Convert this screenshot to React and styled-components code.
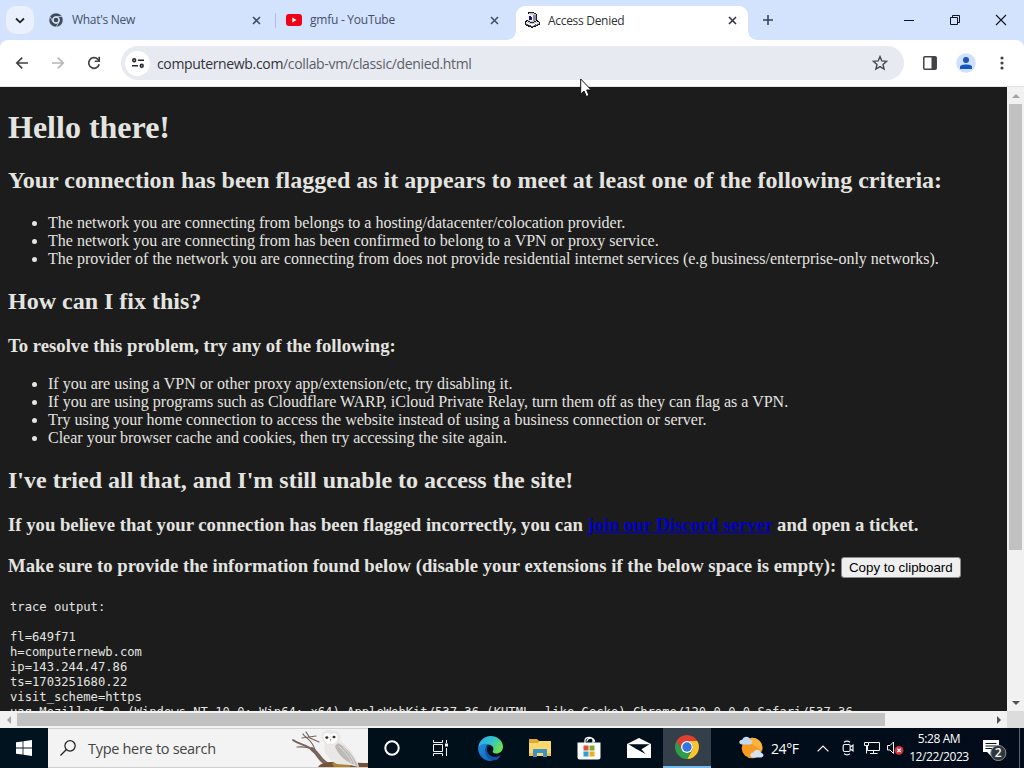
import React from "react";
import styled, { createGlobalStyle } from "styled-components";

const UI = `"Open Sans", "Noto Sans", sans-serif`;

const GlobalStyle = createGlobalStyle`
  * { box-sizing: border-box; }
  body { margin: 0; overflow: hidden; }
`;

const Desktop = styled.div`
  position: relative;
  width: 1024px;
  height: 768px;
  display: flex;
  flex-direction: column;
  overflow: hidden;
  font-family: ${UI};
`;

/* ---------- tab strip ---------- */
const TabStrip = styled.div`
  height: 40px;
  flex: none;
  display: flex;
  background: #d3e2fd;
`;
const TabSearch = styled.div`
  width: 28px;
  height: 28px;
  margin: 6px 6px 0;
  border-radius: 10px;
  background: #e9f1fe;
  display: flex;
  align-items: center;
  justify-content: center;
`;
const Tab = styled.div`
  width: 232px;
  height: ${(p) => (p.$active ? 34 : 28)}px;
  margin-top: 6px;
  padding: 0 8px;
  display: flex;
  align-items: ${(p) => (p.$active ? "flex-start" : "center")};
  position: relative;
  border-radius: 9px 9px 0 0;
  background: ${(p) => (p.$active ? "#fff" : "transparent")};
  & > * { ${(p) => (p.$active ? "height: 28px;" : "")} }
  &::before, &::after {
    content: "";
    display: ${(p) => (p.$active ? "block" : "none")};
    position: absolute;
    bottom: 0;
    width: 9px;
    height: 9px;
  }
  &::before { left: -9px; height: 9px; background: radial-gradient(circle at 0 0, transparent 8.5px, #fff 9px); }
  &::after { right: -9px; height: 9px; background: radial-gradient(circle at 100% 0, transparent 8.5px, #fff 9px); }
`;
const TabIcon = styled.span`
  width: 16px;
  display: flex;
  align-items: center;
  justify-content: center;
`;
const TabTitle = styled.span`
  flex: 1;
  margin-left: 8px;
  font-size: 12px;
  line-height: 30px;
  letter-spacing: ${(p) => p.$spacing || 0}px;
  white-space: nowrap;
  color: ${(p) => (p.$active ? "#303236" : "#44506a")};
`;
const TabClose = styled.span`
  width: 16px;
  display: flex;
  align-items: center;
  justify-content: center;
`;
const TabGap = styled.div`
  width: 6px;
  padding: 13px 0 0 3px;
  &::after {
    content: "";
    display: ${(p) => (p.$line ? "block" : "none")};
    width: 1px;
    height: 15px;
    background: #a9c0ea;
  }
`;
const NewTab = styled.div`
  width: 40px;
  display: flex;
  align-items: center;
  justify-content: center;
`;
const WindowButtons = styled.div`
  display: flex;
  margin-left: auto;
`;
const WindowButton = styled.div`
  width: 46px;
  height: 40px;
  display: flex;
  align-items: center;
  justify-content: center;
`;

/* ---------- toolbar ---------- */
const ToolbarBack = styled.div`
  flex: none;
  background: #d3e2fd;
`;
const Toolbar = styled.div`
  height: 47px;
  padding: 0 4px;
  display: flex;
  align-items: flex-start;
  background: #fff;
  border-radius: 8px 8px 0 0;
  border-bottom: 1px solid #e3e5e8;
`;
const ToolButton = styled.div`
  width: 36px;
  height: 46px;
  display: flex;
  align-items: center;
  justify-content: center;
`;
const Omnibox = styled.div`
  width: 783px;
  height: 34px;
  margin: 6px 8px 0 9px;
  padding: 0 6px 0 4px;
  display: flex;
  align-items: center;
  justify-content: space-between;
  border-radius: 17px;
  background: #e8eaf1;
`;
const SiteInfo = styled.div`
  width: 25px;
  height: 25px;
  border-radius: 50%;
  background: #fff;
  display: flex;
  align-items: center;
  justify-content: center;
`;
const Url = styled.div`
  flex: 1;
  margin-left: 7px;
  font-size: 14px;
  line-height: 35px;
  letter-spacing: ${(p) => p.$spacing || 0}px;
  color: #5b5f67;
  span { color: #303338; }
`;
const StarCell = styled.div`
  width: 36px;
  display: flex;
  justify-content: center;
`;

/* ---------- page ---------- */
const Viewport = styled.div`
  height: 624px;
  flex: none;
  display: flex;
`;
const Page = styled.main`
  width: 1007px;
  height: 624px;
  padding: 21.4px 8px 0;
  overflow: hidden;
  background: #1c1c1c;
  color: #e4e4e0;
  font-family: "Liberation Serif", "Times New Roman", serif;
  font-size: 16px;
  white-space: nowrap;
`;
const Title = styled.h1`
  margin: 0 0 19.4px;
  font-size: 32px;
  line-height: 39px;
`;
const Heading = styled.h2`
  margin: 0 0 19.9px;
  font-size: 24px;
  line-height: 27px;
`;
const SubHeading = styled.h3`
  margin: 0 0 16.7px;
  font-size: 18.72px;
  line-height: ${(p) => p.$height || 23.5}px;
`;
const Link = styled.a`
  color: #0000c8;
  text-decoration: underline;
`;
const List = styled.ul`
  margin: 0 0 19.9px;
  padding-left: 40px;
  line-height: 18px;
`;
const CopyButton = styled.button`
  width: 120px;
  height: 21px;
  padding: 0;
  border: 1px solid #8a8a8a;
  border-radius: 3px;
  background: #efefef;
  color: #000;
  font: 13.33px/17px "Liberation Sans", Arial, sans-serif;
  vertical-align: 0;
`;
const Trace = styled.pre`
  margin: 0;
  padding: 6px 0 0 2px;
  font: 12.18px/15px "DejaVu Sans Mono", monospace;
`;

/* ---------- scroll bars ---------- */
const VScroll = styled.div`
  width: 17px;
  height: 624px;
  padding: 0 2px;
  display: flex;
  flex-direction: column;
  background: #f1f1f1;
`;
const HScroll = styled.div`
  height: 17px;
  flex: none;
  padding: 2px 0;
  display: flex;
  background: #f1f1f1;
`;
const Arrow = styled.div`
  width: ${(p) => (p.$h ? 17 : 13)}px;
  height: ${(p) => (p.$h ? 13 : 17)}px;
  display: flex;
  align-items: center;
  justify-content: center;
`;
const Thumb = styled.div`
  width: ${(p) => p.$w}px;
  height: ${(p) => p.$h}px;
  background: #c1c1c1;
`;
const Spring = styled.div`
  flex: 1;
`;
const Corner = styled.div`
  width: 17px;
  height: 17px;
  margin-top: -2px;
  background: #dcdcdc;
`;

/* ---------- taskbar ---------- */
const Taskbar = styled.div`
  height: 40px;
  flex: none;
  display: flex;
  background: linear-gradient(90deg, #00131e 0%, #000f1a 60%, #020b1a 100%);
  color: #fff;
`;
const TaskItem = styled.div`
  width: ${(p) => p.$w || 49}px;
  height: 40px;
  display: flex;
  align-items: center;
  justify-content: ${(p) => (p.$end ? "flex-end" : "center")};
  padding-right: ${(p) => (p.$end ? 7 : 0)}px;
  background: ${(p) => (p.$open ? "#333f49" : "transparent")};
  border-bottom: ${(p) => (p.$open ? "2px solid #76b9ed" : "0")};
`;
const SearchBox = styled.div`
  width: 320px;
  height: 40px;
  padding-left: 12px;
  display: flex;
  align-items: center;
  border: 1px solid #cfd0d0;
  border-width: 1px 0;
  background: #f3f3f3;
`;
const SearchText = styled.span`
  flex: 1;
  margin-left: 12px;
  font-size: 14.5px;
  letter-spacing: -0.3px;
  color: #444;
`;
const Temperature = styled.div`
  width: 40px;
  font-size: 14px;
  line-height: 41px;
  letter-spacing: -0.4px;
`;
const Clock = styled.div`
  width: 64px;
  padding-top: 2px;
  font-size: 12px;
  line-height: 18px;
  letter-spacing: -0.4px;
  text-align: center;
  white-space: nowrap;
`;
const ShowDesktop = styled.div`
  margin-left: auto;
  width: 5px;
  border-left: 1px solid #5b646e;
`;
const Pointer = styled.svg`
  position: absolute;
  left: 580px;
  top: 78px;
`;

/* ---------- drawings ---------- */
const Cross = ({ s = 7, color = "#303540", w = 1.6 }) => (
  <svg width={s} height={s} viewBox="0 0 8 8" overflow="visible">
    <path d="M0 0L8 8M8 0L0 8" stroke={color} strokeWidth={(w * 8) / s} />
  </svg>
);

const SECTOR = "M0-6H10.39A12 12 0 0 1 0 12L5.196 3A6 6 0 0 0 0-6Z";
const ChromeLogo = ({ size, colors, hub, ring, edge }) => (
  <svg width={size} height={size} viewBox="-12 -12 24 24">
    {colors.map((c, i) => (
      <path key={i} d={SECTOR} fill={c} stroke={edge} strokeWidth={edge ? 0.9 : 0} transform={`rotate(${i * 120})`} />
    ))}
    <circle r="6" fill={ring} />
    <circle r={edge ? 4 : 4.7} fill={hub} />
  </svg>
);

const YouTubeLogo = () => (
  <svg width="16" height="12" viewBox="0 0 16 12">
    <rect width="16" height="12" rx="3" fill="#f00018" />
    <path d="M6.3 3.5L10.6 6L6.3 8.5Z" fill="#fff" />
  </svg>
);

const ComputerLogo = () => (
  <svg width="16" height="16" viewBox="0 0 16 16" shapeRendering="crispEdges">
    <path d="M4 1L8 0L12 2V8L15 10V12.5L8 15.5L1 12.5V10L4 8Z" fill="#c9c9d2" stroke="#16161c" />
    <path d="M4 2L9 3.5V9.6L4 8Z" fill="#f8f8fa" />
    <path d="M5 4L8 5V8.5L5 7.5Z" fill="#1a0e9a" />
    <path d="M9 3.6L11.5 2.8V8.4L9 9.6Z" fill="#8b8b96" />
    <path d="M2 10.6L8 13.2L14 10.6" stroke="#fff" fill="none" />
    <path d="M2 12L8 14.5L14 12" stroke="#555560" fill="none" strokeDasharray="2 1" />
    <path d="M4.5 9.4L8 11L11.6 9.4" stroke="#25252c" fill="none" />
  </svg>
);

const Owl = () => (
  <svg width="76" height="38" viewBox="0 0 76 38">
    <g fill="none" stroke="#75655c" strokeLinecap="round">
      <path d="M1 11C7 16 15 15 22 22" strokeWidth="1.8" />
      <path d="M20 20C28 26 28 33 37 36" strokeWidth="4" />
      <path d="M11 5C13 9 20 10 23 21M14 3L18 9L27 13M5 18C11 18 16 17 23 22M10 9L24 7" strokeWidth="1.2" />
    </g>
    <path d="M26 38C31 30 48 34 76 34V38H26Z" fill="#765137" />
    <path d="M40 34C48 31 52 36 60 34L58 38H42Z" fill="#b08230" />
    <path d="M30 10C28 3 34-.3 41 1.5C48 2 50 7 48 12C56 17 64 26 67 38L58 36L45 35C35 31 30 20 33 15Z" fill="#e9e8e7" />
    <path d="M46 14C56 19 62 28 66 37C54 34 45 25 43 17Z" fill="#bcb9b6" />
    <path d="M47 17C52 22 57 28 60 34M51 18C57 23 61 30 63 36" stroke="#dedbd8" fill="none" />
    <path d="M31 9C30 3 36 2 39 5C42 2 47 4 46 10C45 15 40 16 38 15C34 16 32 13 31 9Z" fill="#fafafa" stroke="#dddbd9" strokeWidth=".6" />
    <ellipse cx="34.8" cy="8.6" rx="1.5" ry="1.3" fill="#333" />
    <ellipse cx="42" cy="8" rx="1.5" ry="1.3" fill="#333" />
    <path d="M38 10L39.3 10L38.5 12.6Z" fill="#a58d6c" />
  </svg>
);

const EdgeLogo = () => (
  <svg width="25" height="25" viewBox="0 0 24 24">
    <defs>
      <linearGradient id="edgeTop" x1="0" y1="0" x2="1" y2=".5">
        <stop offset="0" stopColor="#2aa8e8" />
        <stop offset=".55" stopColor="#30c3d0" />
        <stop offset="1" stopColor="#6be04f" />
      </linearGradient>
      <linearGradient id="edgeLow" x1="0" y1="0" x2="1" y2="1">
        <stop offset="0" stopColor="#1c8fe0" />
        <stop offset="1" stopColor="#1560b8" />
      </linearGradient>
    </defs>
    <path d="M.2 11.6C.6 5 5.6 0 12.2 0C18.6 0 24 4.6 24 10.3C24 14.3 21 16.8 17.5 16.8C15 16.8 13.6 15.8 14.2 14.7C16 12 14 8.3 9.5 8.2C5 8 1.5 9 .2 11.6Z" fill="url(#edgeTop)" />
    <path d="M.1 12.4C.8 8.5 5.5 6.6 10 8C7.6 9.5 7 12 7.4 15C8 19.5 12 22.5 16.5 22.8C9 26.4.6 20.8.1 12.4Z" fill="url(#edgeLow)" />
    <path d="M10.4 8.7C7.6 11 8 16 11.5 18.4C15 20.8 19 20 22 18.2C20.5 21.5 18 23.2 15.7 23.3C10.5 23.4 6.8 19 7.2 14C7.4 11 8.8 9.2 10.4 8.7Z" fill="#1450a5" />
  </svg>
);

const Explorer = () => (
  <svg width="22" height="18" viewBox="0 0 22 18">
    <path d="M0 0H8L10 2H22V17H0Z" fill="#e6a737" />
    <path d="M0 4H9L10 2H22V17H0Z" fill="#f9d86c" />
    <path d="M4 10H18V18H14V14H8V18H4Z" fill="#3f92c7" />
    <path d="M0 14H4V17H0ZM18 14H22V17H18Z" fill="#efc14e" />
  </svg>
);

const Store = () => (
  <svg width="24" height="24" viewBox="0 0 24 24">
    <path d="M8 8V4.5C8 .3 16 .3 16 4.5V8M10 5.5C10 1 18 1 17.5 6" fill="none" stroke="#f5f8fa" strokeWidth="1.3" />
    <path d="M.5 6.5H23.5V21.5Q23.5 23.5 21.5 23.5H2.5Q.5 23.5.5 21.5Z" fill="#fbfdfd" />
    <path d="M6.5 9.5H11.5V14.5H6.5Z" fill="#e05135" />
    <path d="M12.5 9.5H17.5V14.5H12.5Z" fill="#7caf28" />
    <path d="M6.5 15.5H11.5V20.5H6.5Z" fill="#2f9fd9" />
    <path d="M12.5 15.5H17.5V20.5H12.5Z" fill="#f1ad22" />
  </svg>
);

const Mail = () => (
  <svg width="24" height="20" viewBox="0 0 24 20">
    <path d="M0 6L12 0L24 6V20H0Z" fill="#fff" />
    <path d="M1.5 6.2H22.5L14.5 11.3L18.5 16L8 10.3Z" fill="#000f1a" />
  </svg>
);

const Weather = () => (
  <svg width="25" height="24" viewBox="0 0 25 24">
    <circle cx="13" cy="12" r="10.3" fill="#f79b23" />
    <path d="M13 1.7A10.3 10.3 0 0 1 23 15L8 4Z" fill="#fbb33b" />
    <path d="M3.2 8.5C-.8 8.5-.6 4 3.2 3.8C4.5-.5 10.8 0 11 3.8C14.2 4.3 14 8.5 11 8.5Z" fill="#c2d7f1" />
    <path d="M14.4 21.5C10 21.5 10.6 16.5 14.4 16.6C16 12.6 21.3 13.2 21.8 16.7C25.3 17.2 25 21.5 22 21.5Z" fill="#d5e2f5" />
  </svg>
);

const Tri = ({ d, color }) => (
  <svg width="8" height="8" viewBox="0 0 8 8">
    <path d={d} fill={color} />
  </svg>
);

const INACTIVE_TAB = "#44506a";

export default function App() {
  return (
    <Desktop>
      <GlobalStyle />
      <TabStrip>
        <TabSearch>
          <svg width="8" height="5" viewBox="0 0 8 5" overflow="visible">
            <path d="M0 .5L4 4.3L8 .5" fill="none" stroke="#1f2227" strokeWidth="1.8" />
          </svg>
        </TabSearch>
        <Tab>
          <TabIcon>
            <ChromeLogo size={14} colors={["#414a58", "#414a58", "#414a58"]} hub="#414a58" ring="#d3e2fd" edge="#d3e2fd" />
          </TabIcon>
          <TabTitle $spacing={-0.3}>What's New</TabTitle>
          <TabClose><Cross color={INACTIVE_TAB} /></TabClose>
        </Tab>
        <TabGap $line />
        <Tab>
          <TabIcon><YouTubeLogo /></TabIcon>
          <TabTitle $spacing={-0.25}>gmfu - YouTube</TabTitle>
          <TabClose><Cross color={INACTIVE_TAB} /></TabClose>
        </Tab>
        <TabGap />
        <Tab $active>
          <TabIcon><ComputerLogo /></TabIcon>
          <TabTitle $active $spacing={-0.3}>Access Denied</TabTitle>
          <TabClose><Cross /></TabClose>
        </Tab>
        <NewTab>
          <svg width="10" height="10" viewBox="0 0 10 10">
            <path d="M5 0V10M0 5H10" stroke="#3b4250" strokeWidth="1.6" />
          </svg>
        </NewTab>
        <WindowButtons>
          <WindowButton>
            <svg width="10" height="10" viewBox="0 0 10 10"><path d="M0 5.5H10" stroke="#10131a" /></svg>
          </WindowButton>
          <WindowButton>
            <svg width="10" height="10" viewBox="0 0 10 10">
              <path d="M.5 2.5H7.5V9.5H.5ZM2.5 2.5V.5H9.5V7.5H7.5" fill="none" stroke="#10131a" />
            </svg>
          </WindowButton>
          <WindowButton><Cross s={10} w={1.1} color="#10131a" /></WindowButton>
        </WindowButtons>
      </TabStrip>

      <ToolbarBack>
        <Toolbar>
          <ToolButton>
            <svg width="12" height="12" viewBox="0 0 12 12" overflow="visible">
              <path d="M12 6H1M6.2.6L.8 6L6.2 11.4" fill="none" stroke="#3f4246" strokeWidth="1.7" />
            </svg>
          </ToolButton>
          <ToolButton>
            <svg width="12" height="12" viewBox="0 0 12 12" overflow="visible">
              <path d="M0 6H11M5.8.6L11.2 6L5.8 11.4" fill="none" stroke="#b5b7ba" strokeWidth="1.7" />
            </svg>
          </ToolButton>
          <ToolButton>
            <svg width="12" height="12" viewBox="0 0 12 12" overflow="visible">
              <path d="M11.2 7.2A5.3 5.3 0 1 1 9.8 2.2L11 3.6" fill="none" stroke="#3f4246" strokeWidth="1.7" />
              <path d="M12-.2V5H6.8V3.6H10.4V-.2Z" fill="#3f4246" />
            </svg>
          </ToolButton>
          <Omnibox>
            <SiteInfo>
              <svg width="12" height="10" viewBox="0 0 12 10" fill="none" stroke="#25282d" strokeWidth="1.6">
                <circle cx="2.2" cy="2.2" r="1.4" />
                <path d="M6 2.2H12M0 7.8H6" />
                <circle cx="9.7" cy="7.8" r="1.4" />
              </svg>
            </SiteInfo>
            <Url $spacing={-0.34}><span>computernewb.com</span>/collab-vm/classic/denied.html</Url>
            <StarCell>
              <svg width="16" height="16" viewBox="0 0 16 16">
                <path d="M8 1.6L9.8 5.9L14.6 6.3L11 9.4L12.1 14.1L8 11.6L3.9 14.1L5 9.4L1.4 6.3L6.2 5.9Z" fill="none" stroke="#45484d" strokeWidth="1.4" />
              </svg>
            </StarCell>
          </Omnibox>
          <ToolButton>
            <svg width="14" height="14" viewBox="0 0 14 14">
              <rect x=".8" y=".8" width="12.4" height="12.4" rx="1" fill="none" stroke="#404347" strokeWidth="1.5" />
              <path d="M8.5 1H13V13H8.5Z" fill="#404347" />
            </svg>
          </ToolButton>
          <ToolButton>
            <svg width="20" height="20" viewBox="0 0 20 20">
              <circle cx="10" cy="10" r="9.8" fill="#cfe1fc" />
              <circle cx="10" cy="7" r="3" fill="#1556c0" />
              <path d="M4 16V14C4 10.8 16 10.8 16 14V16Z" fill="#1556c0" />
            </svg>
          </ToolButton>
          <ToolButton>
            <svg width="4" height="14" viewBox="0 0 4 14" fill="#404347">
              <circle cx="2" cy="2" r="1.6" /><circle cx="2" cy="7" r="1.6" /><circle cx="2" cy="12" r="1.6" />
            </svg>
          </ToolButton>
        </Toolbar>
      </ToolbarBack>

      <Viewport>
        <Page>
          <Title>Hello there!</Title>
          <Heading>Your connection has been flagged as it appears to meet at least one of the following criteria:</Heading>
          <List>
            <li>The network you are connecting from belongs to a hosting/datacenter/colocation provider.</li>
            <li>The network you are connecting from has been confirmed to belong to a VPN or proxy service.</li>
            <li>The provider of the network you are connecting from does not provide residential internet services (e.g business/enterprise-only networks).</li>
          </List>
          <Heading>How can I fix this?</Heading>
          <SubHeading>To resolve this problem, try any of the following:</SubHeading>
          <List>
            <li>If you are using a VPN or other proxy app/extension/etc, try disabling it.</li>
            <li>If you are using programs such as Cloudflare WARP, iCloud Private Relay, turn them off as they can flag as a VPN.</li>
            <li>Try using your home connection to access the website instead of using a business connection or server.</li>
            <li>Clear your browser cache and cookies, then try accessing the site again.</li>
          </List>
          <Heading>I've tried all that, and I'm still unable to access the site!</Heading>
          <SubHeading>
            If you believe that your connection has been flagged incorrectly, you can <Link>join our Discord server</Link> and open a ticket.
          </SubHeading>
          <SubHeading $height={24}>
            Make sure to provide the information found below (disable your extensions if the below space is empty):{" "}
            <CopyButton>Copy to clipboard</CopyButton>
          </SubHeading>
          <Trace>{`trace output:

fl=649f71
h=computernewb.com
ip=143.244.47.86
ts=1703251680.22
visit_scheme=https
uag=Mozilla/5.0 (Windows NT 10.0; Win64; x64) AppleWebKit/537.36 (KHTML, like Gecko) Chrome/120.0.0.0 Safari/537.36`}</Trace>
        </Page>
        <VScroll>
          <Arrow><Tri d="M0 6L4 2L8 6Z" color="#a3a3a3" /></Arrow>
          <Thumb $w={13} $h={446} />
          <Spring />
          <Arrow><Tri d="M0 2L4 6L8 2Z" color="#505050" /></Arrow>
        </VScroll>
      </Viewport>
      <HScroll>
        <Arrow $h><Tri d="M6 0L2 4L6 8Z" color="#a3a3a3" /></Arrow>
        <Thumb $w={868} $h={13} />
        <Spring />
        <Arrow $h><Tri d="M2 0L6 4L2 8Z" color="#505050" /></Arrow>
        <Corner />
      </HScroll>

      <Taskbar>
        <TaskItem $w={48}>
          <svg width="16" height="16" viewBox="0 0 16 16" fill="#fff">
            <path d="M0 2.3L6.6 1.4V7.6H0ZM7.4 1.2L16 0V7.6H7.4ZM0 8.4H6.6V14.6L0 13.7ZM7.4 8.4H16V16L7.4 14.8Z" />
          </svg>
        </TaskItem>
        <SearchBox>
          <svg width="16" height="16" viewBox="0 0 18 18" fill="none" stroke="#222" strokeWidth="1.4">
            <circle cx="11.3" cy="6.6" r="5.8" />
            <path d="M7.2 10.7L.5 17.5" />
          </svg>
          <SearchText>Type here to search</SearchText>
          <Owl />
        </SearchBox>
        <TaskItem $w={48}>
          <svg width="16" height="16" viewBox="0 0 16 16"><circle cx="8" cy="8" r="6.7" fill="none" stroke="#fff" strokeWidth="2" /></svg>
        </TaskItem>
        <TaskItem $w={48}>
          <svg width="17" height="16" viewBox="0 0 17 16" fill="none" stroke="#f4f7f8">
            <path d="M1.5 0V2.5H10.5V0M1.5 16V13.5H10.5V16M1.5 4.5H10.5V11.5H1.5ZM14.5 0V3M14.5 8V16" />
            <path d="M13 3.5H16V6.5H13Z" fill="#f4f7f8" stroke="none" />
          </svg>
        </TaskItem>
        <TaskItem $w={53}><EdgeLogo /></TaskItem>
        <TaskItem $w={46}><Explorer /></TaskItem>
        <TaskItem $w={51}><Store /></TaskItem>
        <TaskItem $w={49}><Mail /></TaskItem>
        <TaskItem $w={48} $open>
          <ChromeLogo size={24} colors={["#fcc52a", "#2d9d4c", "#e2402f"]} hub="#3277dd" ring="#fff" />
        </TaskItem>
        <TaskItem $w={60} $end><Weather /></TaskItem>
        <Temperature>24°F</Temperature>
        <TaskItem $w={24}>
          <svg width="12" height="7" viewBox="0 0 12 7"><path d="M.6 6.4L6 1L11.4 6.4" fill="none" stroke="#fff" strokeWidth="1.2" /></svg>
        </TaskItem>
        <TaskItem $w={25}>
          <svg width="12" height="16" viewBox="0 0 12 16" fill="none" stroke="#f3f5f7" strokeWidth="1.2">
            <rect x="1.2" y="4.5" width="7" height="7" rx="1.5" />
            <path d="M8.2 7L11 5.2V10.8L8.2 9M2 2.2Q5 .2 8 2.2M2 13.8Q5 15.8 8 13.8" />
          </svg>
        </TaskItem>
        <TaskItem $w={23}>
          <svg width="16" height="14" viewBox="0 0 16 14" fill="none" stroke="#f3f5f7">
            <path d="M5 1.5H15.5V9.5H3.5V5M9.5 9.5V13M6 12.5H13.5M.5 1.5H4.5V4.5H.5ZM2.5 4.5V12.5" />
          </svg>
        </TaskItem>
        <TaskItem $w={24}>
          <svg width="17" height="14" viewBox="0 0 17 14">
            <path d="M.5 4.5H3L6.5 1V12.5L3 9H.5Z" fill="none" stroke="#f3f5f7" />
            <circle cx="12" cy="9.3" r="4.4" fill="#d23440" />
            <path d="M10.3 7.6L13.7 11M13.7 7.6L10.3 11" stroke="#fff" strokeWidth="1.1" />
          </svg>
        </TaskItem>
        <Clock>5:28 AM<br />12/22/2023</Clock>
        <TaskItem $w={48}>
          <svg width="26" height="26" viewBox="0 0 26 26">
            <path d="M1 5H17V17H9V21L5 17H1Z" fill="#fff" />
            <path d="M3.5 8.5H14.5M3.5 11H14.5M3.5 13.5H10" stroke="#0a1320" />
            <circle cx="16.3" cy="18" r="7.6" fill="#30363d" stroke="#8a9097" />
            <text x="16.3" y="22.4" fontSize="12" fontWeight="600" fill="#fff" textAnchor="middle" fontFamily="Open Sans, sans-serif">2</text>
          </svg>
        </TaskItem>
        <ShowDesktop />
      </Taskbar>

      <Pointer width="13" height="20" viewBox="0 0 13 20">
        <path d="M.7 1V16.2L4 13L6.3 18.5L9 17.4L6.7 12H11.3Z" fill="#fff" stroke="#111" strokeWidth="1" />
      </Pointer>
    </Desktop>
  );
}
